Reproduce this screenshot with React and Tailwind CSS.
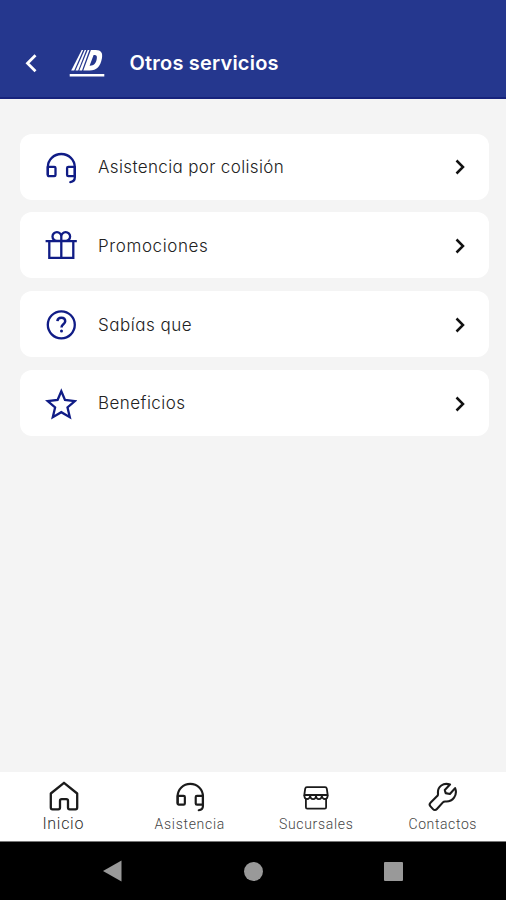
import React from "react";

const HeadsetIcon = ({ className }) => (
  <svg viewBox="0 0 32 32" fill="none" stroke="currentColor" strokeWidth="2.3" strokeLinejoin="round" strokeLinecap="round" className={className}>
    <path d="M2.8 22.5V15.4C2.8 7.8 8.8 2 16.3 2s13.5 5.8 13.5 13.4v10.1c0 2.400-1.600 4.200-4.500 4.600" />
    <path d="M2.8 14.8h6.400c.8 0 1.300.5 1.300 1.300v6.800c0 .8-.5 1.300-1.300 1.300H4.100c-.8 0-1.300-.5-1.300-1.300z" />
    <path d="M29.8 14.8h-6.400c-.8 0-1.300.5-1.300 1.300v6.800c0 .8.5 1.300 1.300 1.300h6.400z" />
  </svg>
);

const GiftIcon = ({ className }) => (
  <svg viewBox="0 0 32 32" fill="none" stroke="currentColor" strokeWidth="2.3" className={className}>
    <path d="M.6 11.200h31.200M4.300 11.200v16.700h24V11.200M16.300 10v17.900" />
    <path d="M16.300 10.900V6.600a4.400 4.400 0 1 0-4.400 4.300zM16.300 10.900V6.600a4.400 4.400 0 1 1 4.400 4.300z" />
  </svg>
);

const QuestionIcon = ({ className }) => (
  <svg viewBox="0 0 32 32" fill="none" stroke="currentColor" strokeWidth="2.3" className={className}>
    <circle cx="16.300" cy="15.800" r="13.500" />
    <path d="M12.400 12.200c.2-2.200 1.800-3.400 3.900-3.400 2.300 0 3.900 1.400 3.900 3.500 0 3.200-3.700 2.900-3.700 6.100" strokeWidth="2.5" />
    <circle cx="16.500" cy="22" r="1.500" fill="currentColor" stroke="none" />
  </svg>
);

const StarIcon = ({ className }) => (
  <svg viewBox="0 0 32 32" fill="none" stroke="currentColor" strokeWidth="2.3" className={className}>
    <path d="M16.300 3.200l3.700 8.800 9.900 1.100-7.400 6.300 2.300 9.800-8.500-5-8.500 5 2.300-9.800-7.400-6.300 9.900-1.100z" />
  </svg>
);

const HomeIcon = ({ className }) => (
  <svg viewBox="0 0 30 30" fill="none" stroke="currentColor" strokeWidth="2.300" strokeLinejoin="round" className={className}>
    <path d="M15 1.800L1.800 12.500v14.100c0 1 .7 1.700 1.700 1.700h5.800c1 0 1.700-.7 1.700-1.700v-6.800c0-1 .7-1.700 1.700-1.700h4.600c1 0 1.700.7 1.700 1.700v6.800c0 1 .7 1.700 1.700 1.700h5.800c1 0 1.700-.7 1.700-1.700V12.500z" />
  </svg>
);

const StoreIcon = ({ className }) => (
  <svg viewBox="0 0 26 24" fill="none" stroke="currentColor" strokeWidth="1.800" strokeLinejoin="round" className={className}>
    <path d="M3.900 1.200h18.200c1 0 1.500.5 1.700 1.500l.9 6.300H1.300l.9-6.300c.2-1 .7-1.500 1.700-1.500z" />
    <path d="M1.300 9c0 2.600.9 4 2.700 4S7.200 11.200 7.200 9c0 2.200 1.100 4.200 2.900 4.200S13 11.200 13 9c0 2.200 1.100 4.200 2.900 4.200s2.900-2 2.900-4.200c0 2.200 1.400 4 3.200 4s2.700-1.400 2.700-4" />
    <path d="M2.900 12.800v8.400c0 .9.500 1.400 1.400 1.400h17.400c.9 0 1.400-.5 1.400-1.400v-8.400" />
  </svg>
);

const WrenchIcon = ({ className }) => (
  <svg viewBox="0 0 30 30" fill="none" stroke="currentColor" strokeWidth="2.100" strokeLinejoin="round" className={className}>
    <path d="M22 2.600C15.500.2 9.300 4.500 10 11.400c.1 1.200 0 2-.8 2.700L2.700 20.500c-1.300 1.200-1.300 2.700-.2 3.900l2.500 2.700c1.200 1.300 2.700 1.200 3.900-.1l6-6.600c.7-.8 1.500-1 2.600-.9 7.200.6 12.400-6.500 9.600-13.400l-5.200 5.900-4.300-.9-.8-3.200z" />
  </svg>
);

const Logo = () => (
  <svg viewBox="0 0 36 30" className="h-[30px] w-9">
    <g fill="#fff">
      <path d="M12.700 2h1.500L5.200 22.500H2.200z" />
      <path d="M15.700 2h1.500L9.200 22.500H6.500z" />
      <path d="M18.700 2h1.700L13 22.500h-2.700z" />
      <path fillRule="evenodd" d="M21.900 2h4.800c5.400 0 7.300 2.900 6.200 8.600-1.500 7.900-5.200 11.900-12.200 11.900h-6.400zM24.600 7l-4 10.700c4.200.2 6.300-2.100 7.100-6.400.6-3.300 0-4.400-3.100-4.300z" />
      <path d="M.7 26h34.600v2.600H.7z" />
    </g>
  </svg>
);

const services = [
  { label: "Asistencia por colisión", Icon: HeadsetIcon, text: "tracking-[0.360px]" },
  { label: "Promociones", Icon: GiftIcon, text: "tracking-[0.620px]" },
  { label: "Sabías que", Icon: QuestionIcon, text: "tracking-[0.500px]" },
  { label: "Beneficios", Icon: StarIcon, text: "tracking-[0.460px]" },
];

const tabs = [
  { label: "Inicio", Icon: HomeIcon, icon: "-mt-[3px] ml-0.5 size-[30px]", text: "text-[16px] text-[#2c2c2c] tracking-[0.7px]" },
  { label: "Asistencia", Icon: HeadsetIcon, icon: "-mt-px size-[30px]", text: "text-[14px] text-[#444] tracking-[0.7px]" },
  { label: "Sucursales", Icon: StoreIcon, icon: "mt-px h-6 w-[26px]", text: "text-[14px] text-[#444] tracking-[0.7px]" },
  { label: "Contactos", Icon: WrenchIcon, icon: "size-[30px]", text: "text-[14px] text-[#444] tracking-[0.6px]" },
];

const App = () => {
  return (
    <div className="flex h-[900px] w-[506px] flex-col overflow-hidden bg-[#f4f4f4] font-['Inter',sans-serif]">
      {/* Header */}
      <header className="flex h-[99px] shrink-0 items-center border-b-2 border-[#17237c] bg-[#25378e] pt-7 pl-6">
        <svg viewBox="0 0 14 20" fill="none" stroke="#fff" strokeWidth="2.800" className="h-5 w-3.5">
          <path d="M11.500 2.200L3.500 10.200l8 8" />
        </svg>
        <div className="ml-[30.5px]">
          <Logo />
        </div>
        <h1 className="ml-[25px] text-[20px] leading-7 font-semibold tracking-[0.2px] whitespace-nowrap text-white [font-feature-settings:'cv11']">
          Otros servicios
        </h1>
      </header>

      {/* Services */}
      <main className="flex flex-1 flex-col gap-[12.8px] pt-[34.7px] pr-[17px] pl-5">
        {services.map(({ label, Icon, text }) => (
          <button key={label} className="flex h-[66px] items-center rounded-xl bg-white pr-[23px] pl-[25px] text-left">
            <Icon className="mt-0.5 size-8 text-[#101c86]" />
            <span className={`ml-[21px] flex-1 pt-0.5 text-[17px] font-light whitespace-nowrap text-[#222] [font-feature-settings:'cv11'] ${text}`}>
              {label}
            </span>
            <svg viewBox="0 0 12 18" fill="none" stroke="#111" strokeWidth="2.500" className="mt-px h-[18px] w-3">
              <path d="M2.500 2.500L9 9l-6.500 6.500" />
            </svg>
          </button>
        ))}
      </main>

      {/* Bottom tabs */}
      <nav className="grid h-[70px] shrink-0 grid-cols-4 border-b border-[#777] bg-white font-['Roboto',sans-serif]">
        {tabs.map(({ label, Icon, icon, text }) => (
          <button key={label} className="flex flex-col items-center pt-2.5">
            <span className="flex h-[30px] items-center">
              <Icon className={`text-[#1b1b1b] ${icon}`} />
            </span>
            <span className={`leading-6 font-light ${text}`}>{label}</span>
          </button>
        ))}
      </nav>

      {/* Android buttons */}
      <div className="flex h-[58px] shrink-0 items-center justify-between bg-black pr-[103px] pl-[103px] text-[#999]">
        <svg viewBox="0 0 19 22" fill="currentColor" className="h-[22px] w-[19px]">
          <path d="M0 11L18.500 .5v21z" />
        </svg>
        <div className="size-[19px] rounded-full bg-[#999]" />
        <div className="size-[19px] rounded-[1px] bg-[#999]" />
      </div>
    </div>
  );
};

export default App;
